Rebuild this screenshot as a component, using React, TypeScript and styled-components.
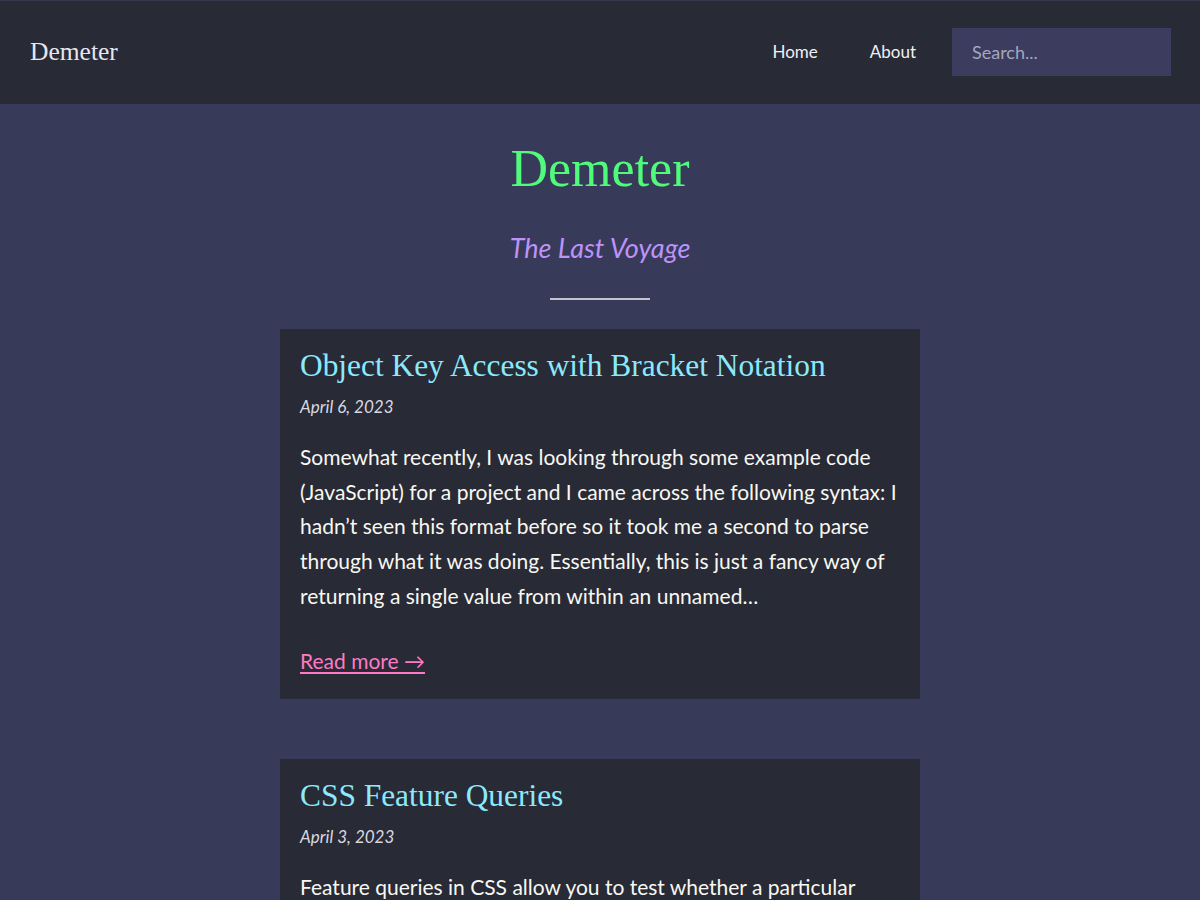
import React from "react";
import styled, { createGlobalStyle } from "styled-components";

const GlobalStyle = createGlobalStyle`
  html, body {
    margin: 0;
    padding: 0;
    background: #383a59;
  }
  body {
    font-family: "Lato", "Noto Sans", sans-serif;
    color: #f8f8f2;
  }
  * { box-sizing: border-box; }
`;

const serif = `"Liberation Serif", "DejaVu Serif", serif`;
const sans = `"Lato", "Noto Sans", sans-serif`;

const Page = styled.div`
  min-height: 900px;
  background: #383a59;
`;

const Header = styled.header`
  height: 104px;
  background: #282a36;
  border-top: 1px solid #34364a;
  display: flex;
  align-items: center;
  justify-content: space-between;
  padding: 0 29px 2px 30px;
`;

const Logo = styled.a`
  font-family: ${serif};
  font-size: 25.5px;
  color: #e6e6ee;
  text-decoration: none;
`;

const Nav = styled.nav`
  display: flex;
  align-items: center;
`;

const NavLink = styled.a<{ $gap: number }>`
  font-family: ${sans};
  font-size: 17px;
  color: #f0f0f4;
  text-decoration: none;
  margin-right: ${(p) => p.$gap}px;
`;

const Search = styled.input`
  width: 219px;
  height: 48px;
  border: none;
  outline: none;
  background: #3b3c5e;
  padding: 0 20px;
  font-family: ${sans};
  font-size: 18px;
  color: #f8f8f2;
  &::placeholder {
    color: #a5a6bd;
  }
`;

const Main = styled.main`
  display: flex;
  flex-direction: column;
  align-items: center;
  padding-top: 35px;
`;

const SiteTitle = styled.h1`
  margin: 0;
  font-family: ${serif};
  font-weight: 400;
  font-size: 52px;
  line-height: 60px;
  color: #50fa7b;
`;

const Subtitle = styled.p`
  margin: 33px 0 0;
  font-family: ${sans};
  font-style: italic;
  font-size: 27px;
  line-height: 32px;
  color: #bd93f9;
`;

const Divider = styled.hr`
  width: 100px;
  height: 0;
  border: none;
  border-top: 2px solid #c4c4d0;
  margin: 34px 0 29px;
`;

const Card = styled.article`
  width: 640px;
  background: #282a36;
  padding: 18px 20px 23px;
  margin-bottom: 60px;
`;

const PostTitle = styled.h2`
  margin: 0;
  font-family: ${serif};
  font-weight: 400;
  font-size: 31.4px;
  line-height: 38px;
  color: #8be9fd;
`;

const PostDate = styled.p`
  margin: 11px 0 0;
  font-family: ${sans};
  font-style: italic;
  font-size: 17px;
  line-height: 22px;
  color: #d8d8e0;
`;

const Excerpt = styled.p`
  margin: 22px 0 0;
  font-family: ${sans};
  font-size: 21px;
  line-height: 34.7px;
  color: #f8f8f2;
`;

const ReadMore = styled.a`
  display: inline-block;
  margin-top: 32px;
  font-family: ${sans};
  font-size: 21px;
  line-height: 30px;
  color: #ff79c6;
  text-decoration: underline;
  text-underline-offset: 3px;
`;

const posts = [
  {
    title: "Object Key Access with Bracket Notation",
    date: "April 6, 2023",
    excerpt:
      "Somewhat recently, I was looking through some example code (JavaScript) for a project and I came across the following syntax: I hadn\u2019t seen this format before so it took me a second to parse through what it was doing. Essentially, this is just a fancy way of returning a single value from within an unnamed\u2026",
  },
  {
    title: "CSS Feature Queries",
    date: "April 3, 2023",
    excerpt:
      "Feature queries in CSS allow you to test whether a particular feature is supported by the browser before applying a set of styles. This lets you write progressively enhanced CSS without breaking older browsers\u2026",
  },
];

export default function App() {
  return (
    <Page>
      <GlobalStyle />
      <Header>
        <Logo href="#">Demeter</Logo>
        <Nav>
          <NavLink href="#" $gap={52}>Home</NavLink>
          <NavLink href="#" $gap={36}>About</NavLink>
          <Search placeholder="Search..." />
        </Nav>
      </Header>
      <Main>
        <SiteTitle>Demeter</SiteTitle>
        <Subtitle>The Last Voyage</Subtitle>
        <Divider />
        {posts.map((p) => (
          <Card key={p.title}>
            <PostTitle>{p.title}</PostTitle>
            <PostDate>{p.date}</PostDate>
            <Excerpt>{p.excerpt}</Excerpt>
            <ReadMore href="#">Read more &rarr;</ReadMore>
          </Card>
        ))}
      </Main>
    </Page>
  );
}
